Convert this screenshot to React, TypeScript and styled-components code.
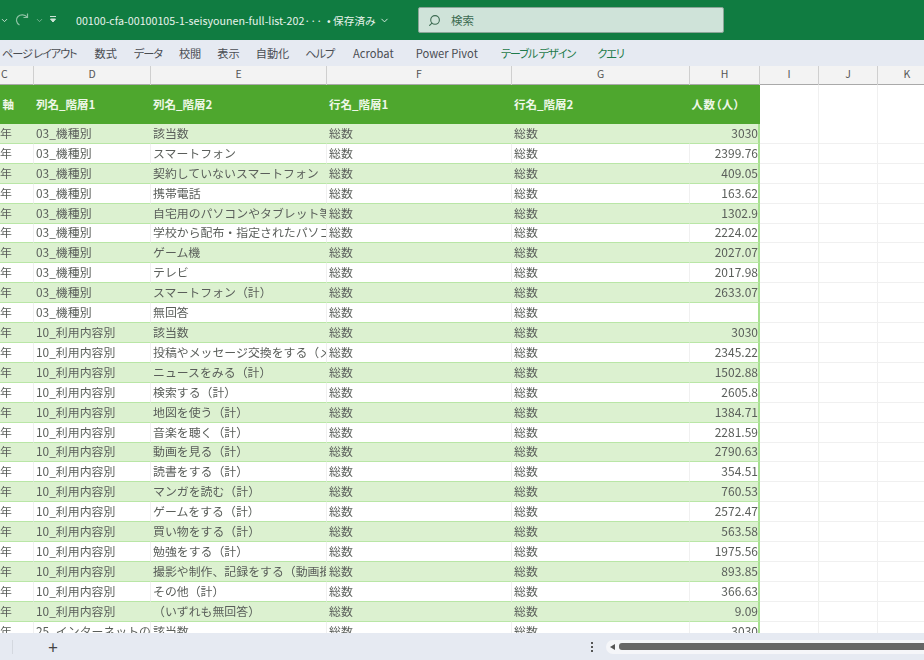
import { ChevronDown, Search } from "lucide-react";
import styled, { createGlobalStyle } from "styled-components";

const COLUMNS = "34px 117px 176px 185px 178px 70px 59px 59px 59px";

const GlobalStyle = createGlobalStyle`
  html, body {
    margin: 0;
    padding: 0;
    overflow: hidden;
    background: #fff;
  }
`;

const Page = styled.div`
  width: 924px;
  height: 660px;
  display: flex;
  flex-direction: column;
  overflow: hidden;
  font-family: "Noto Sans CJK JP", "Noto Sans", sans-serif;
  filter: blur(0.6px);
`;

const TitleBar = styled.header`
  height: 40px;
  flex: none;
  display: flex;
  align-items: center;
  background: #107c41;
  color: #e8f3ec;
  font-size: 10.7px;
`;

const QuickAccess = styled.div`
  width: 76px;
  flex: none;
  display: flex;
  align-items: center;
  gap: 3px;
  color: #8fc3a5;
`;

const FileName = styled.span`
  width: 251px;
  flex: none;
  white-space: nowrap;
  overflow: hidden;
`;

const SaveState = styled.span`
  width: 91px;
  flex: none;
  display: flex;
  align-items: center;
  gap: 3px;
  white-space: nowrap;
`;

const SearchBox = styled.div`
  width: 306px;
  height: 26px;
  box-sizing: border-box;
  display: flex;
  align-items: center;
  gap: 10px;
  padding-left: 9px;
  background: #cfe3d9;
  border: 1px solid #8aa597;
  border-radius: 2px;
  color: #3d6b52;
  font-size: 11.5px;
`;

const SearchIcon = styled(Search)`
  transform: scaleX(-1);
`;

const RibbonTabs = styled.nav`
  height: 26px;
  flex: none;
  display: flex;
  align-items: center;
  gap: 17px;
  padding-left: 2px;
  background: #e6eaf2;
  font-size: 11.2px;
  font-feature-settings: "palt";
`;

const Tab = styled.span<{ $accent?: boolean; $kana?: boolean; $extra?: number }>`
  white-space: nowrap;
  margin-left: ${(p) => p.$extra ?? 0}px;
  letter-spacing: ${(p) => (p.$kana ? "-1.1px" : "0")};
  color: ${(p) => (p.$accent ? "#1f7a4a" : "#4a4d52")};
`;

const ColumnHeaders = styled.div`
  height: 19px;
  flex: none;
  display: grid;
  grid-template-columns: ${COLUMNS};
  background: #f3f3f3;
  border-bottom: 1px solid #a9a9a9;
  box-sizing: border-box;
`;

const ColumnLabel = styled.div<{ $left?: boolean }>`
  display: flex;
  align-items: center;
  justify-content: ${(p) => (p.$left ? "flex-start" : "center")};
  padding: 0 0 6px ${(p) => (p.$left ? "1px" : "0")};
  border-right: 1px solid #cfcfcf;
  color: #555;
  font-size: 10.5px;
`;

const Sheet = styled.main`
  flex: 1;
  min-height: 0;
  overflow: hidden;
`;

const HeaderRow = styled.div`
  height: 39px;
  display: grid;
  grid-template-columns: ${COLUMNS};
  background: linear-gradient(to right, #4ea72e 760px, #fff 760px);
  color: #eef7e8;
  font-size: 11.5px;
  font-weight: 700;
  font-feature-settings: "palt";
`;

const HeaderCell = styled.div<{ $right?: boolean }>`
  display: flex;
  align-items: center;
  justify-content: ${(p) => (p.$right ? "flex-end" : "flex-start")};
  padding: 0 ${(p) => (p.$right ? "20px" : "3px")} 2px ${(p) => (p.$right ? "0" : "2px")};
  overflow: hidden;
  white-space: nowrap;
  box-sizing: border-box;
`;

const PeopleCell = styled(HeaderCell)`
  letter-spacing: 0.5px;
`;

const BlankHeader = styled.div`
  border-right: 1px solid #f0f0f0;
`;

const Row = styled.div`
  height: 19.92px;
  display: grid;
  grid-template-columns: ${COLUMNS};
`;

const Cell = styled.div<{ $striped: boolean; $align?: "left" | "right" }>`
  display: flex;
  align-items: center;
  justify-content: ${(p) => (p.$align === "right" ? "flex-end" : "flex-start")};
  padding: 0 1px 2px 2px;
  overflow: hidden;
  white-space: nowrap;
  box-sizing: border-box;
  color: #5a5e5a;
  font-size: 11.9px;
  background: ${(p) => (p.$striped ? "#dcf1d0" : "#fff")};
  border-bottom: 1px solid #b9e6a6;
  border-right: 1px solid ${(p) => (p.$striped ? "#dcf1d0" : "#f0f0f0")};
`;

const YearCell = styled(Cell)`
  justify-content: flex-end;
  padding: 0 21px 2px 0;
`;

const ValueCell = styled(Cell)`
  border-right: 2px solid #a8e091;
  padding-right: 0;
  font-size: 12px;
`;

const BlankCell = styled.div`
  border-right: 1px solid #f0f0f0;
  border-bottom: 1px solid #f0f0f0;
`;

const Footer = styled.footer`
  height: 27px;
  flex: none;
  display: flex;
  align-items: center;
  background: #e6eaf2;
`;

const SheetNav = styled.div`
  width: 12px;
  height: 14px;
  flex: none;
  border-right: 1px solid #d4d8df;
`;

const AddSheet = styled.span`
  width: 80px;
  flex: none;
  text-align: center;
  color: #444;
  font-size: 17px;
  line-height: 1;
`;

const Dots = styled.span`
  margin-left: 498px;
  width: 2px;
  height: 2px;
  flex: none;
  background: #555;
  box-shadow: 0 -4px 0 #555, 0 4px 0 #555;
`;

const ScrollTrack = styled.div`
  margin-left: 13px;
  flex: 1;
  height: 14px;
  min-width: 0;
  display: flex;
  align-items: center;
  gap: 4px;
  padding-left: 4px;
  background: #f5f6f9;
  border-radius: 7px 0 0 7px;
`;

const ScrollArrow = styled.span`
  width: 0;
  height: 0;
  flex: none;
  border-top: 3.5px solid transparent;
  border-bottom: 3.5px solid transparent;
  border-right: 5px solid #555;
`;

const ScrollThumb = styled.div`
  flex: 1;
  height: 7px;
  background: #666;
  border-radius: 3px 0 0 3px;
`;

const FILE_NAME = "00100-cfa-00100105-1-seisyounen-full-list-202···";

const TABS = [
  { label: "ページ レイアウト", kana: true, extra: 0 },
  { label: "数式", extra: 1 },
  { label: "データ", kana: true },
  { label: "校閲" },
  { label: "表示", extra: -1 },
  { label: "自動化", extra: -1 },
  { label: "ヘルプ", kana: true, extra: -1 },
  { label: "Acrobat", extra: 2 },
  { label: "Power Pivot", extra: 5 },
  { label: "テーブル デザイン", kana: true, accent: true, extra: 6 },
  { label: "クエリ", kana: true, accent: true, extra: 5 },
];

const LETTERS = ["D", "E", "F", "G", "H", "I", "J", "K"];

const DEVICE = "03_機種別";
const USAGE = "10_利用内容別";

const ROWS: [string, string, string][] = [
  [DEVICE, "該当数", "3030"],
  [DEVICE, "スマートフォン", "2399.76"],
  [DEVICE, "契約していないスマートフォン", "409.05"],
  [DEVICE, "携帯電話", "163.62"],
  [DEVICE, "自宅用のパソコンやタブレット等", "1302.9"],
  [DEVICE, "学校から配布・指定されたパソコン", "2224.02"],
  [DEVICE, "ゲーム機", "2027.07"],
  [DEVICE, "テレビ", "2017.98"],
  [DEVICE, "スマートフォン（計）", "2633.07"],
  [DEVICE, "無回答", ""],
  [USAGE, "該当数", "3030"],
  [USAGE, "投稿やメッセージ交換をする（メ", "2345.22"],
  [USAGE, "ニュースをみる（計）", "1502.88"],
  [USAGE, "検索する（計）", "2605.8"],
  [USAGE, "地図を使う（計）", "1384.71"],
  [USAGE, "音楽を聴く（計）", "2281.59"],
  [USAGE, "動画を見る（計）", "2790.63"],
  [USAGE, "読書をする（計）", "354.51"],
  [USAGE, "マンガを読む（計）", "760.53"],
  [USAGE, "ゲームをする（計）", "2572.47"],
  [USAGE, "買い物をする（計）", "563.58"],
  [USAGE, "勉強をする（計）", "1975.56"],
  [USAGE, "撮影や制作、記録をする（動画撮", "893.85"],
  [USAGE, "その他（計）", "366.63"],
  [USAGE, "（いずれも無回答）", "9.09"],
  ["25_インターネットの", "該当数", "3030"],
];

function QatIcons() {
  return (
    <QuickAccess>
      <ChevronDown size={9} strokeWidth={2.5} color="#cfe5d8" />
      <svg width="20" height="16" viewBox="0 0 20 16" fill="none" stroke="currentColor" strokeWidth="1.2">
        <path d="M15 5C13 2.5 8.5 2 6 4.5 3.5 7 4 11 7.5 13" />
        <path d="M15.5 1.5V5.5H11.5" />
      </svg>
      <ChevronDown size={9} strokeWidth={2} />
      <svg width="12" height="12" viewBox="0 0 12 12" fill="none" stroke="#cfe5d8" strokeWidth="1">
        <path d="M3 2.5H9" />
        <path d="M3.5 5H8.5L6 8Z" fill="#cfe5d8" />
      </svg>
    </QuickAccess>
  );
}

export default function App() {
  return (
    <Page>
      <GlobalStyle />
      <TitleBar>
        <QatIcons />
        <FileName>{FILE_NAME}</FileName>
        <SaveState>
          • 保存済み <ChevronDown size={11} />
        </SaveState>
        <SearchBox>
          <SearchIcon size={13} />
          検索
        </SearchBox>
      </TitleBar>
      <RibbonTabs>
        {TABS.map((t) => (
          <Tab key={t.label} $kana={t.kana} $accent={t.accent} $extra={t.extra}>
            {t.label}
          </Tab>
        ))}
      </RibbonTabs>
      <ColumnHeaders>
        <ColumnLabel $left>C</ColumnLabel>
        {LETTERS.map((l) => (
          <ColumnLabel key={l}>{l}</ColumnLabel>
        ))}
      </ColumnHeaders>
      <Sheet>
        <HeaderRow>
          <HeaderCell $right>軸</HeaderCell>
          <HeaderCell>列名_階層1</HeaderCell>
          <HeaderCell>列名_階層2</HeaderCell>
          <HeaderCell>行名_階層1</HeaderCell>
          <HeaderCell>行名_階層2</HeaderCell>
          <PeopleCell $right>人数（人）</PeopleCell>
          <BlankHeader />
          <BlankHeader />
          <BlankHeader />
        </HeaderRow>
        {ROWS.map(([group, item, value], i) => {
          const striped = i % 2 === 0;
          return (
            <Row key={i}>
              <YearCell $striped={striped}>令和5年</YearCell>
              <Cell $striped={striped}>{group}</Cell>
              <Cell $striped={striped}>{item}</Cell>
              <Cell $striped={striped}>総数</Cell>
              <Cell $striped={striped}>総数</Cell>
              <ValueCell $striped={striped} $align="right">
                {value}
              </ValueCell>
              <BlankCell />
              <BlankCell />
              <BlankCell />
            </Row>
          );
        })}
      </Sheet>
      <Footer>
        <SheetNav />
        <AddSheet>+</AddSheet>
        <Dots />
        <ScrollTrack>
          <ScrollArrow />
          <ScrollThumb />
        </ScrollTrack>
      </Footer>
    </Page>
  );
}
